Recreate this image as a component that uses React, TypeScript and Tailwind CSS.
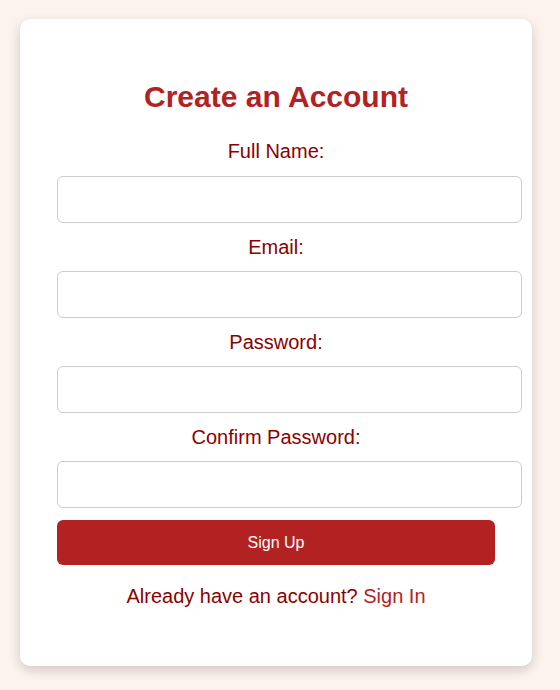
import React from "react";

const FIELDS = [
  { id: "fullName", label: "Full Name:", type: "text" },
  { id: "email", label: "Email:", type: "email" },
  { id: "password", label: "Password:", type: "password" },
  { id: "confirm", label: "Confirm Password:", type: "password" },
];

export default function App() {
  return (
    <div className="min-h-screen bg-[#fcf3ef] px-[20px] pt-[19px] pb-[24px] font-['Liberation_Sans',Arial,sans-serif]">
      <div className="w-[512px] rounded-[10px] bg-white px-[37px] pb-[58px] shadow-[0_4px_12px_rgba(0,0,0,0.18)]">
        <h1 className="pt-[61px] text-center text-[30px] font-bold leading-[34px] text-[#b22222]">
          Create an Account
        </h1>

        <form className="mt-[26px]" onSubmit={(e) => e.preventDefault()}>
          {FIELDS.map((f, i) => (
            <div key={f.id}>
              {i === 0 ? (
                <label
                  htmlFor={f.id}
                  className="mb-[13px] block text-center text-[20px] leading-[23px] text-[#8b0000]"
                >
                  {f.label}
                </label>
              ) : (
                <label
                  htmlFor={f.id}
                  className="flex h-[48px] items-center justify-center text-[20px] leading-[23px] text-[#8b0000]"
                >
                  {f.label}
                </label>
              )}
              <input
                id={f.id}
                type={f.type}
                className="block h-[47px] w-[465px] rounded-[6px] border border-[#cccccc] bg-white px-3 text-base outline-none"
              />
            </div>
          ))}

          <button
            type="submit"
            className="mt-[12px] flex h-[45px] w-[438px] items-center justify-center rounded-[6px] bg-[#b22222] text-[16px] text-white"
          >
            Sign Up
          </button>
        </form>

        <p className="mt-[20px] text-center text-[20px] leading-[23px] text-[#8b0000]">
          Already have an account?{" "}
          <a href="#" className="text-[#b22222]">
            Sign In
          </a>
        </p>
      </div>
    </div>
  );
}
